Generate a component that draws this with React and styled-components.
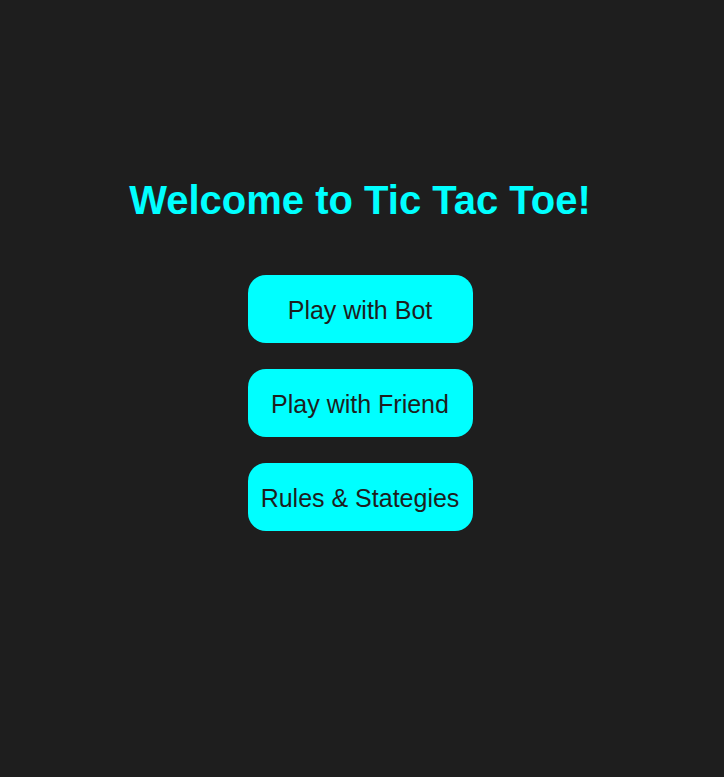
import React from "react";
import styled, { createGlobalStyle } from "styled-components";

const GlobalStyle = createGlobalStyle`
  html, body {
    margin: 0;
    padding: 0;
    background: #1e1e1e;
    font-family: "Liberation Sans", Arial, sans-serif;
  }
`;

const Page = styled.div`
  width: 720px;
  min-height: 777px;
  display: flex;
  flex-direction: column;
  align-items: center;
  padding-top: 177px;
  box-sizing: border-box;
`;

const Title = styled.h1`
  margin: 0 0 52px;
  color: #00ffff;
  font-size: 40px;
  line-height: 46px;
  font-weight: bold;
`;

const Menu = styled.div`
  display: flex;
  flex-direction: column;
  gap: 26px;
`;

const MenuButton = styled.button`
  width: 225px;
  height: 68px;
  border: none;
  border-radius: 18px;
  background: #00ffff;
  color: #1e1e1e;
  font-family: "Liberation Sans", Arial, sans-serif;
  font-size: 25px;
  padding: 2px 0 0;
  cursor: pointer;
`;

export default function App() {
  return (
    <>
      <GlobalStyle />
      <Page>
        <Title>Welcome to Tic Tac Toe!</Title>
        <Menu>
          <MenuButton>Play with Bot</MenuButton>
          <MenuButton>Play with Friend</MenuButton>
          <MenuButton>Rules &amp; Stategies</MenuButton>
        </Menu>
      </Page>
    </>
  );
}
